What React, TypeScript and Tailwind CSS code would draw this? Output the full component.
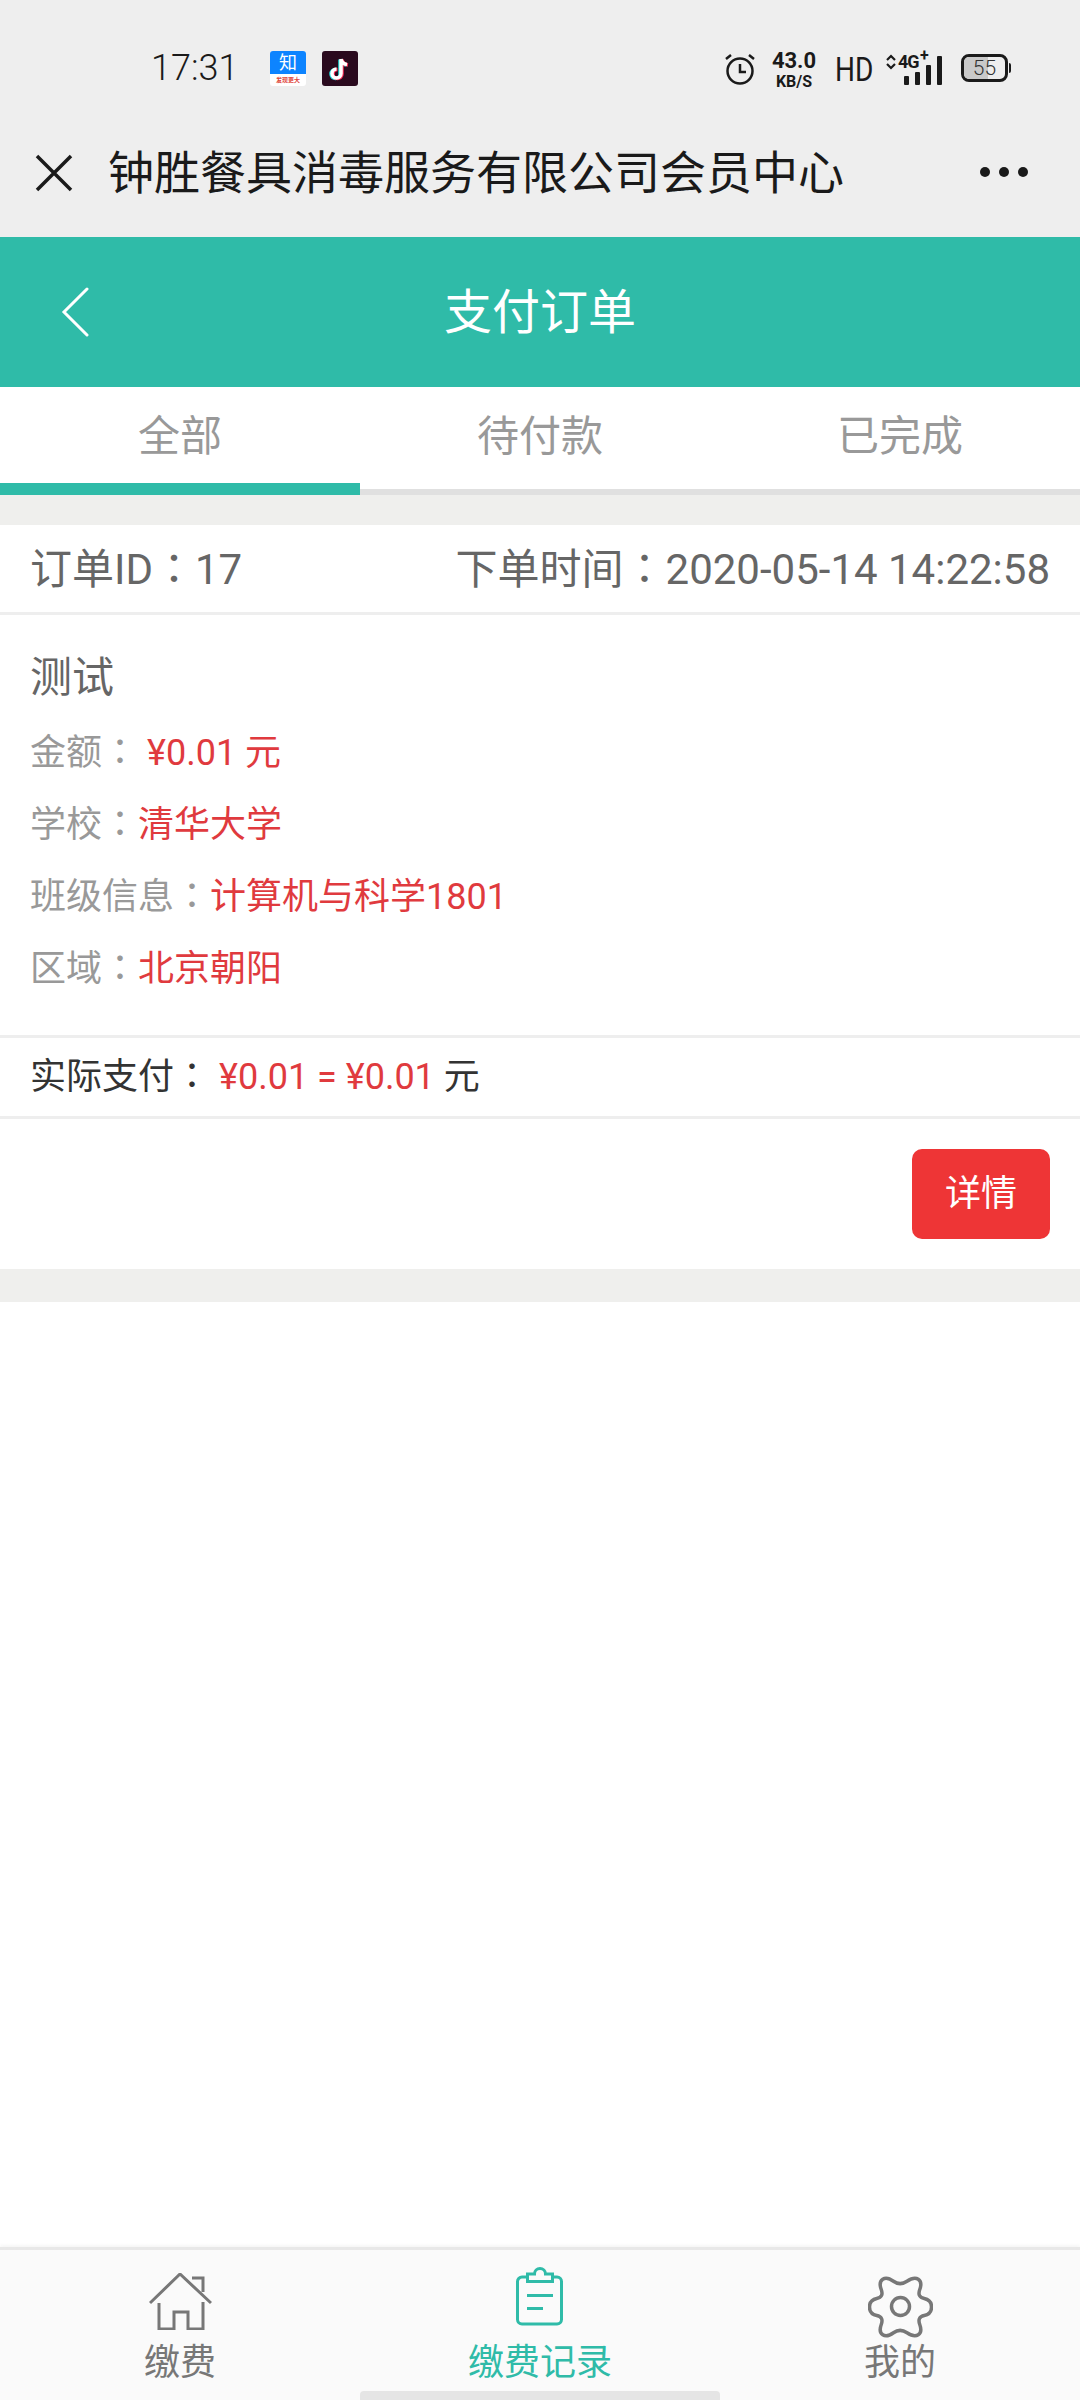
const cjk = "font-['Roboto','Noto_Sans_CJK_SC',sans-serif]";

// the reference centres its fullwidth colon, which only the TC cut does
const Colon = () => <span className="font-['Noto_Sans_CJK_TC',sans-serif] leading-none">：</span>;

const tiktok = "M13 3v14.500a4.500 4.500 0 1 1-4.500-4.500M13 3c.5 3 2.500 5 6 5.500";

const StatusBar = () => (
  <div className="flex h-[88px] items-start pt-[50px] text-[#1a1a1a]">
    <span className="ml-[151px] w-[89px] text-[36px] leading-[36px] font-light">17:31</span>
    {/* zhihu notification */}
    <div className="ml-[30px] mt-[1px] flex h-[35px] w-[36px] flex-col overflow-hidden rounded-[3px] bg-white">
      <div className="flex h-[23px] items-center justify-center bg-[#0d84ff] text-[18px] leading-[18px] text-white">知</div>
      <div className="mt-[3px] text-center text-[6px] leading-[6px] font-bold text-[#e0453a]">发现更大</div>
    </div>
    {/* tiktok notification */}
    <div className="ml-[16px] mt-[1px] flex h-[35px] w-[36px] items-center justify-center rounded-[3px] bg-[#2a0a1e]">
      <svg width="24" height="26" viewBox="0 0 24 26" fill="none">
        <path d={tiktok} stroke="#25e4e4" strokeWidth="3.500" transform="translate(-1 0.500)" />
        <path d={tiktok} stroke="#fe2c55" strokeWidth="3.500" transform="translate(1 0.500)" />
        <path d={tiktok} stroke="#ffffff" strokeWidth="3.500" />
      </svg>
    </div>
    {/* alarm */}
    <svg className="ml-[367px] mt-[3px]" width="30" height="32" viewBox="0 0 30 32" fill="none" stroke="#1a1a1a">
      <circle cx="15" cy="18" r="12.500" strokeWidth="2.500" />
      <path d="M15 11v8h6" strokeWidth="2.500" />
      <path d="M1 6l5-4M29 6l-5-4" strokeWidth="2.500" />
    </svg>
    <div className="ml-[15px] flex w-[48px] flex-col items-center font-bold">
      <span className="text-[22px] leading-[21px]">43.0</span>
      <span className="mt-[3px] text-[16px] leading-[15px]">KB/S</span>
    </div>
    <span className="ml-[17px] mt-[3px] w-[44px] origin-left scale-x-[0.85] text-[33px] leading-[33px] font-normal">HD</span>
    {/* network + signal */}
    <div className="relative ml-[7px] mt-[3px] h-[32px] w-[58px]">
      <svg className="absolute left-0 top-[1px]" width="10" height="16" viewBox="0 0 10 16" fill="none" stroke="#1a1a1a" strokeWidth="2.200">
        <path d="M1 6l4-4 4 4M1 10l4 4 4-4" />
      </svg>
      <span className="absolute left-[12px] top-0 text-[18px] leading-[18px] font-bold tracking-[-1px]">4G</span>
      <span className="absolute left-[34px] top-[-5px] text-[16px] leading-[16px] font-bold">+</span>
      <div className="absolute bottom-0 left-[18px] flex items-end gap-[6px]">
        <div className="h-[9px] w-[5px] rounded-[1px] bg-[#1a1a1a]" />
        <div className="h-[13px] w-[5px] rounded-[1px] bg-[#1a1a1a]" />
        <div className="h-[20px] w-[5px] rounded-[1px] bg-[#1a1a1a]" />
        <div className="h-[29px] w-[5px] rounded-[1px] bg-[#1a1a1a]" />
      </div>
    </div>
    {/* battery */}
    <div className="relative ml-[17px] mt-[4px] flex h-[28px] w-[47px] items-center justify-center overflow-hidden rounded-[8px] border-[3px] border-[#1a1a1a]">
      <div className="absolute inset-y-0 left-0 w-[24px] bg-[#c9c9c9]" />
      <span className="relative text-[21px] leading-[21px] font-light text-[#333]">55</span>
    </div>
    <div className="ml-[1px] mt-[13px] h-[10px] w-[2px] rounded-r bg-[#1a1a1a]" />
  </div>
);

const TitleBar = () => (
  <div className="flex h-[149px] items-start bg-[#eeeeee] pt-[58px]">
    <svg className="ml-[35px] mt-[8px]" width="38" height="38" viewBox="0 0 38 38" fill="none" stroke="#1a1a1a" strokeWidth="3.500">
      <path d="M2 2l34 34M36 2L2 36" />
    </svg>
    <span className="ml-[35px] text-[46px] leading-[54px] font-normal text-[#1a1a1a]">钟胜餐具消毒服务有限公司会员中心</span>
    <div className="ml-[136px] mt-[21px] flex gap-[9px]">
      <div className="h-[10px] w-[10px] rounded-full bg-[#1a1a1a]" />
      <div className="h-[10px] w-[10px] rounded-full bg-[#1a1a1a]" />
      <div className="h-[10px] w-[10px] rounded-full bg-[#1a1a1a]" />
    </div>
  </div>
);

const tabs = ["全部", "待付款", "已完成"];

const Tabs = () => (
  <div className="flex h-[108px] border-b-[6px] border-[#e0e0e0] bg-white">
    {tabs.map((t, i) => (
      <div
        key={t}
        className="relative flex h-[102px] w-[360px] items-start justify-center pt-[27px] text-[42px] leading-[46px] text-[#999999]"
      >
        {t}
        {i === 0 && <div className="absolute bottom-[-6px] left-0 h-[12px] w-[360px] bg-[#2fbba8]" />}
      </div>
    ))}
  </div>
);

const Info = ({ label, value, nbsp }: { label: string; value: string; nbsp?: boolean }) => (
  <div className="h-[72px] text-[36px] leading-[72px] text-[#999999]">
    {label}
    <Colon />
    <span className={nbsp ? "ml-[9px] text-[#e03a3e]" : "text-[#e03a3e]"}>{value}</span>
  </div>
);

const OrderCard = () => (
  <div className="bg-white">
    <div className="flex h-[90px] items-center justify-between border-b-[3px] border-[#eeeeee] px-[30px] pt-[2px] text-[42px] text-[#666666]">
      <span>
        订单ID<Colon />17
      </span>
      <span>
        下单时间<Colon />2020-05-14 14:22:58
      </span>
    </div>
    <div className="h-[423px] border-b-[3px] border-[#eeeeee] px-[30px] pt-[27px]">
      <div className="mb-[3px] h-[72px] text-[42px] leading-[72px] text-[#666666]">测试</div>
      <Info label="金额" value="¥0.01 元" nbsp />
      <Info label="学校" value="清华大学" />
      <Info label="班级信息" value="计算机与科学1801" />
      <Info label="区域" value="北京朝阳" />
    </div>
    <div className="flex h-[81px] items-center border-b-[3px] border-[#eeeeee] px-[30px] text-[36px] text-[#333333]">
      <span>
        实际支付
        <Colon />
      </span>
      <span className="ml-[9px] text-[#e03a3e]">¥0.01 = ¥0.01</span>
      <span className="ml-[9px]">元</span>
    </div>
    <div className="flex h-[150px] items-center justify-end px-[30px]">
      <button className="h-[90px] w-[138px] rounded-[10px] bg-[#ee3536] text-[36px] text-white">详情</button>
    </div>
  </div>
);

const BottomNav = () => (
  <div className="relative h-[153px] border-t-[3px] border-[#e8e8e8] bg-[#fafafa] shadow-[0_-2px_3px_rgba(0,0,0,0.04)]">
    <div className="flex">
      <div className="flex w-[360px] flex-col items-center pt-[23px] text-[36px] leading-[44px] text-[#777777]">
        <svg width="63" height="57" viewBox="0 0 63 57" fill="none" stroke="#777777" strokeWidth="3">
          <path d="M1 30L31 1l31 29M43 5h11v14" />
          <path d="M10 30v26h15V39h14v17h15V29" />
        </svg>
        <span className="mt-[11px]">缴费</span>
      </div>
      <div className="flex w-[360px] flex-col items-center pt-[16px] text-[36px] leading-[44px] text-[#2fbba8]">
        <svg width="50" height="61" viewBox="0 0 50 61" fill="none" stroke="#2fbba8" strokeWidth="3">
          <path d="M12 11H7a4.500 4.500 0 0 0-4.500 4.500v38A4.500 4.500 0 0 0 7 58h35a4.500 4.500 0 0 0 4.500-4.500v-38A4.500 4.500 0 0 0 42 11h-4" />
          <path d="M12.500 15.500h25V8h-7a5.500 5.500 0 0 0-11 0h-7z" />
          <path d="M12 29.500h26M12 42.500h16" />
        </svg>
        <span className="mt-[14px]">缴费记录</span>
      </div>
      <div className="flex w-[360px] flex-col items-center pt-[26px] text-[36px] leading-[44px] text-[#777777]">
        <svg width="65" height="62" viewBox="0 0 65 62" fill="none" stroke="#777777" strokeWidth="3.500">
          <path d="M25.500 5.250Q32 10 39 5.250Q46 .5 50.250 3.250Q54.500 6 51.750 13.500Q49 21 56.250 22.500Q63.500 24 63.500 31Q63.500 38 56.250 39.500Q49 41 51.750 48.500Q54.500 56 50.250 58.750Q46 61.500 39 56.750Q32 52 25.500 56.750Q19 61.500 14.750 58.750Q10.500 56 13.250 48.500Q16 41 8.750 39.500Q1.500 38 1.500 31Q1.500 24 8.750 22.500Q16 21 13.250 13.500Q10.500 6 14.750 3.250Q19 .5 25.500 5.250Z" />
          <circle cx="32.500" cy="30.500" r="9" />
        </svg>
        <span className="mt-[3px]">我的</span>
      </div>
    </div>
    <div className="absolute bottom-0 left-[360px] h-[9px] w-[360px] rounded-t-[4px] bg-[#e5e5e5]" />
  </div>
);

export default function App() {
  return (
    <div className={`${cjk} flex h-[2400px] w-[1080px] flex-col bg-white`}>
      <div className="bg-[#eeeeee]">
        <StatusBar />
        <TitleBar />
      </div>
      <div className="relative flex h-[150px] items-center justify-center bg-[#2fbba8] pt-[2px] text-[48px] text-white">
        <svg className="absolute left-[61px] top-[50px]" width="28" height="50" viewBox="0 0 28 50" fill="none" stroke="#ffffff" strokeWidth="3" strokeLinecap="round">
          <path d="M26 2L3 25l23 23" />
        </svg>
        支付订单
      </div>
      <Tabs />
      <div className="h-[30px] bg-[#efefed]" />
      <OrderCard />
      <div className="h-[33px] bg-[#efefed]" />
      <div className="flex-1" />
      <BottomNav />
    </div>
  );
}
